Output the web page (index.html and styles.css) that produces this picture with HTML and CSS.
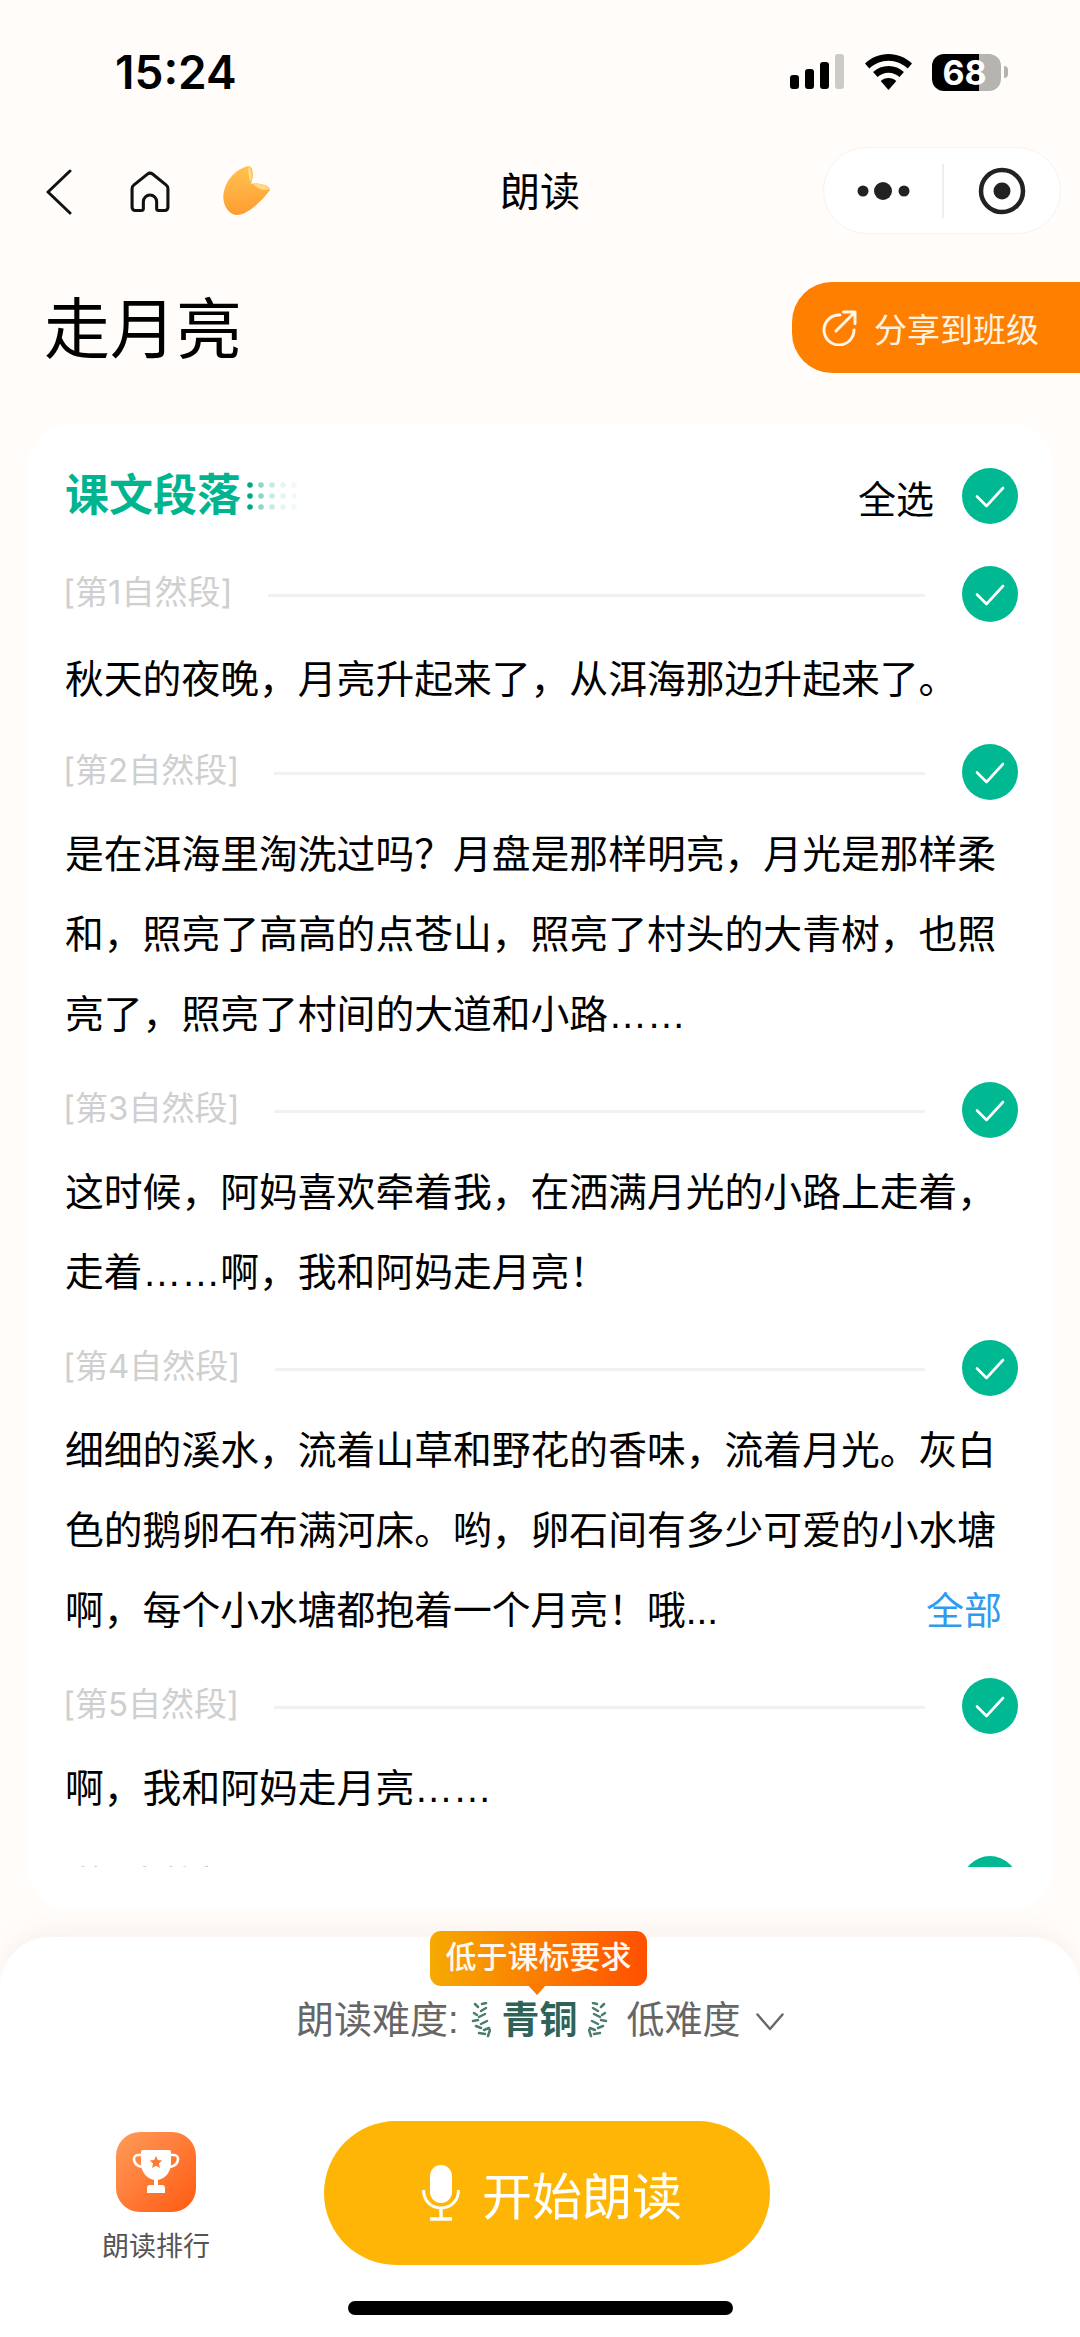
FILE: index.html
```html
<!DOCTYPE html>
<html lang="zh-CN">
<head>
<meta charset="utf-8">
<title>朗读</title>
<link rel="stylesheet" href="styles.css">
</head>
<body>
<svg class="defs" width="0" height="0" aria-hidden="true">
  <symbol id="check" viewBox="0 0 56 56">
    <circle cx="28" cy="28" r="28" fill="#00B992"/>
    <path d="M15 28.500 24.500 38 41 20" fill="none" stroke="#fff" stroke-width="2.600" stroke-linecap="round" stroke-linejoin="round"/>
  </symbol>
  <symbol id="laurel" viewBox="0 0 20 36">
    <path d="M11 2 15 1M7 5 4 2M10 9 15 6M3 11 6 13M8 15 14 12M2 19 7 18M10 22 16 19M5 24 10 26M13 28 18 26M8 31 14 32M17 34 19 28" fill="none" stroke="#4A7D70" stroke-width="2.500" stroke-linecap="round"/>
  </symbol>
</svg>
<div class="page">
  <header class="status">
    <span class="time">15:24</span>
    <div class="status-icons">
      <svg class="signal" width="54" height="36" viewBox="0 0 54 36">
        <rect x="0" y="21" width="9" height="14" rx="3" fill="#000"/>
        <rect x="15" y="15" width="9" height="20" rx="3" fill="#000"/>
        <rect x="30" y="8" width="9" height="27" rx="3" fill="#000"/>
        <rect x="45" y="0" width="9" height="35" rx="3" fill="#cdcbc8"/>
      </svg>
      <svg class="wifi" width="47" height="36" viewBox="0 0 47 36">
        <path d="M23.500 0C14.500 0 6.500 3.500 0 9.500l4.300 5C9.600 9.800 16.300 6.800 23.500 6.800s13.900 3 19.200 7.700l4.300-5C40.500 3.500 32.500 0 23.500 0z" fill="#000"/>
        <path d="M23.500 12c-6 0-11.300 2.300-15.400 6l4.400 5c3-2.600 6.800-4.200 11-4.200s8 1.600 11 4.200l4.400-5C34.800 14.300 29.500 12 23.500 12z" fill="#000"/>
        <path d="M23.500 24c-3 0-5.700 1-7.800 2.900L23.500 36l7.800-9.100C29.200 25 26.500 24 23.500 24z" fill="#000"/>
      </svg>
      <div class="battery"><span class="battery-num">68</span></div>
      <span class="battery-nub"></span>
    </div>
  </header>

  <nav class="nav">
    <div class="nav-left">
      <svg class="back" width="26" height="46" viewBox="0 0 26 46"><path d="M24 2 2 23l22 21" fill="none" stroke="#111" stroke-width="3" stroke-linecap="round" stroke-linejoin="round"/></svg>
      <svg class="home" width="40" height="42" viewBox="0 0 39 41"><path d="M11 38.500H5a3 3 0 0 1-3-3V17a4 4 0 0 1 1.600-3.200L17 3a4 4 0 0 1 5 0l13.400 10.800A4 4 0 0 1 37 17v18.500a3 3 0 0 1-3 3h-6a2 2 0 0 1-2-2V30a6.500 6.500 0 0 0-13 0v6.500a2 2 0 0 1-2 2z" fill="none" stroke="#111" stroke-width="3" stroke-linejoin="round"/></svg>
      <svg class="petal" width="48" height="50" viewBox="0 0 48 50">
        <defs>
          <linearGradient id="pg" x1=".4" y1="0" x2=".5" y2="1"><stop offset="0" stop-color="#FFC355"/><stop offset="1" stop-color="#FF9C2E"/></linearGradient>
          <linearGradient id="pg2" x1=".7" y1="0" x2=".2" y2="1"><stop offset="0" stop-color="#FFC24A"/><stop offset="1" stop-color="#FFB044"/></linearGradient>
        </defs>
        <path d="M25 0C14 3 4 12 1 25c-3 12 4 24 13 24 10 0 24-13 33-25 0-2-2-4-5-5-4-1-9-2-14-1 2-5 2-12 1-15-1-2-2-3-4-3z" fill="url(#pg)"/>
        <path d="M25 1C16 4 9 11 6 22c6-5 16-7 22-4 2-6 2-13 0-16z" fill="url(#pg2)"/>
        <path d="M27 2c2 5 2 11 1 15-2-5-3-11-3-16z" fill="#FFDD8E"/>
        <path d="M30 18c6-1 12 0 17 5-5 2-11 1-17-5z" fill="#FFD888"/>
      </svg>
    </div>
    <div class="nav-title">朗读</div>
    <div class="capsule">
      <div class="capsule-side">
        <svg width="54" height="20" viewBox="0 0 54 20"><circle cx="6" cy="10" r="5.500" fill="#222"/><circle cx="26" cy="10" r="9" fill="#222"/><circle cx="47" cy="10" r="5.500" fill="#222"/></svg>
      </div>
      <span class="capsule-div"></span>
      <div class="capsule-side">
        <svg width="48" height="48" viewBox="0 0 48 48"><circle cx="24" cy="24" r="21" fill="none" stroke="#222" stroke-width="4.500"/><circle cx="24" cy="24" r="8.500" fill="#222"/></svg>
      </div>
    </div>
  </nav>

  <section class="heading">
    <h1 class="title">走月亮</h1>
    <div class="share">
      <svg width="36" height="36" viewBox="0 0 36 36"><path d="M18 5A15 15 0 1 0 32 20" fill="none" stroke="#FFF6E8" stroke-width="3" stroke-linecap="round"/><path d="M14 21 33 2M21.500 2H33V13.500" fill="none" stroke="#FFF6E8" stroke-width="3" stroke-linecap="round" stroke-linejoin="round"/></svg>
      <span class="share-text">分享到班级</span>
    </div>
  </section>

  <main class="card">
    <div class="card-head">
      <div class="card-title-wrap">
        <h2 class="card-title">课文段落</h2>
        <svg width="52" height="28" viewBox="0 0 52 28" fill="#00A886">
          <g><circle cx="3" cy="3" r="2.800"/><circle cx="3" cy="14" r="2.800"/><circle cx="3" cy="25" r="2.800"/></g>
          <g opacity=".45"><circle cx="14" cy="3" r="2.800"/><circle cx="14" cy="14" r="2.800"/><circle cx="14" cy="25" r="2.800"/></g>
          <g opacity=".22"><circle cx="25" cy="3" r="2.800"/><circle cx="25" cy="14" r="2.800"/><circle cx="25" cy="25" r="2.800"/></g>
          <g opacity=".1"><circle cx="36" cy="3" r="2.800"/><circle cx="36" cy="14" r="2.800"/><circle cx="36" cy="25" r="2.800"/></g>
          <g opacity=".05"><circle cx="47" cy="3" r="2.800"/><circle cx="47" cy="14" r="2.800"/><circle cx="47" cy="25" r="2.800"/></g>
        </svg>
      </div>
      <div class="select-all">
        <span class="select-text">全选</span>
        <svg class="check"><use href="#check"/></svg>
      </div>
    </div>
    <div class="list">
      <article class="para">
        <div class="para-head"><span class="para-label">[第1自然段]</span><span class="para-line"></span><svg class="check"><use href="#check"/></svg></div>
        <p class="para-text">秋天的夜晚，月亮升起来了，从洱海那边升起来了。</p>
      </article>
      <article class="para">
        <div class="para-head"><span class="para-label">[第2自然段]</span><span class="para-line"></span><svg class="check"><use href="#check"/></svg></div>
        <p class="para-text">是在洱海里淘洗过吗？月盘是那样明亮，月光是那样柔和，照亮了高高的点苍山，照亮了村头的大青树，也照亮了，照亮了村间的大道和小路……</p>
      </article>
      <article class="para">
        <div class="para-head"><span class="para-label">[第3自然段]</span><span class="para-line"></span><svg class="check"><use href="#check"/></svg></div>
        <p class="para-text">这时候，阿妈喜欢牵着我，在洒满月光的小路上走着，走着……啊，我和阿妈走月亮！</p>
      </article>
      <article class="para">
        <div class="para-head"><span class="para-label">[第4自然段]</span><span class="para-line"></span><svg class="check"><use href="#check"/></svg></div>
        <p class="para-text">细细的溪水，流着山草和野花的香味，流着月光。灰白色的鹅卵石布满河床。哟，卵石间有多少可爱的小水塘</p>
        <div class="para-last"><span class="para-text">啊，每个小水塘都抱着一个月亮！哦...</span><a class="more">全部</a></div>
      </article>
      <article class="para">
        <div class="para-head"><span class="para-label">[第5自然段]</span><span class="para-line"></span><svg class="check"><use href="#check"/></svg></div>
        <p class="para-text">啊，我和阿妈走月亮……</p>
      </article>
      <article class="para">
        <div class="para-head"><span class="para-label">[第6自然段]</span><span class="para-line"></span><svg class="check"><use href="#check"/></svg></div>
      </article>
    </div>
  </main>

  <footer class="panel">
    <div class="tip">低于课标要求</div>
    <div class="level">
      <span class="level-text">朗读难度:</span>
      <svg class="laurel" width="20" height="36"><use href="#laurel"/></svg>
      <strong class="level-name">青铜</strong>
      <svg class="laurel laurel-r" width="20" height="36"><use href="#laurel"/></svg>
      <span class="level-text level-low">低难度</span>
      <svg class="chev" width="28" height="18" viewBox="0 0 28 18"><path d="M1.500 1.500 14 16 26.500 1.500" fill="none" stroke="#666" stroke-width="2.400" stroke-linecap="round" stroke-linejoin="round"/></svg>
    </div>
    <div class="actions">
      <div class="rank">
        <div class="rank-icon">
          <svg width="50" height="50" viewBox="0 0 50 50">
            <path d="M12 3H38a2 2 0 0 1 2 2V16C40 26 33 33 25 33 17 33 10 26 10 16V5a2 2 0 0 1 2-2z" fill="#fff"/>
            <path d="M23 32h4v7h-4z" fill="#fff"/>
            <path d="M19 38h12a3 3 0 0 1 3 3v5H16v-5a3 3 0 0 1 3-3z" fill="#fff"/>
            <path d="M11 8H7a4 4 0 0 0-4 4c0 4 3 7 8 8M39 8h4a4 4 0 0 1 4 4c0 4-3 7-8 8" fill="none" stroke="#fff" stroke-width="2.600"/>
            <path d="m25 9 1.800 4 4.400.5-3.200 3 .9 4.400-3.900-2.200-3.900 2.200.9-4.400-3.200-3 4.400-.5z" fill="#FF7A30"/>
          </svg>
        </div>
        <span class="rank-label">朗读排行</span>
      </div>
      <button class="start">
        <svg width="38" height="56" viewBox="0 0 38 56">
          <rect x="8" y="0" width="22" height="38" rx="11" fill="#fff"/>
          <path d="M1.500 25c0 10 7 18 17.500 18s17.500-8 17.500-18" fill="none" stroke="#fff" stroke-width="3"/>
          <path d="M19 43v10M8 54h22" fill="none" stroke="#fff" stroke-width="3.400"/>
        </svg>
        <span class="start-text">开始朗读</span>
      </button>
    </div>
    <div class="home-bar"></div>
  </footer>
</div>
</body>
</html>
```

FILE: styles.css
```css
* { box-sizing: border-box; margin: 0; padding: 0; }
html, body { width: 1080px; height: 2337px; overflow: hidden; }
body { background: #FFFCF9; color: #000; font-family: "Liberation Sans", "Noto Sans CJK SC", sans-serif; }
.defs { position: absolute; }
.page { height: 2337px; display: flex; flex-direction: column; }

.status { height: 144px; padding: 0 72px 0 115px; display: flex; align-items: center; justify-content: space-between; }
.time { font-family: Inter, "Liberation Sans", sans-serif; font-size: 46px; font-weight: 600; }
.status-icons { display: flex; align-items: center; }
.signal { margin-right: 21px; }
.wifi { margin-right: 20px; }
.battery { width: 69px; height: 37px; border-radius: 12px; background: linear-gradient(90deg, #000 0, #000 68%, #B5B4B0 68%); display: flex; align-items: center; justify-content: center; }
.battery-num { font-family: Inter, "Liberation Sans", sans-serif; font-size: 34px; font-weight: 700; color: #fff; margin-right: 4px; }
.battery-nub { width: 4px; height: 12px; margin-left: 3px; border-radius: 0 4px 4px 0; background: #B5B4B0; }

.nav { height: 96px; padding: 0 19px 0 46px; display: flex; align-items: center; position: relative; }
.nav-left { display: flex; align-items: center; }
.home { margin-left: 58px; }
.petal { margin-left: 53px; margin-top: -2px; }
.nav-title { position: absolute; left: 0; right: 0; text-align: center; font-size: 40px; line-height: 96px; }
.capsule { margin-left: auto; width: 238px; height: 87px; margin-top: -3px; padding-left: 2px; border-radius: 44px; background: #fff; border: 1px solid #F6F3F0; display: flex; align-items: center; position: relative; }
.capsule-side { flex: 1; display: flex; align-items: center; justify-content: center; }
.capsule-div { width: 2px; height: 54px; background: #F0EEEC; }

.heading { height: 184px; padding: 42px 0 0 44px; display: flex; align-items: flex-start; justify-content: space-between; }
.title { font-size: 66px; font-weight: 400; line-height: 96px; }
.share { width: 288px; height: 91px; border-radius: 40px 0 0 40px; background: #FF7F00; padding-left: 30px; display: flex; align-items: center; }
.share-text { margin-left: 16px; font-size: 33px; color: #FFF3E2; }

.card { height: 1486px; margin: 0 27px 0 28px; padding: 44px 35px 43px 37px; background: #fff; border-radius: 42px; display: flex; flex-direction: column; }
.card-head { height: 56px; margin-bottom: 42px; display: flex; align-items: center; justify-content: space-between; flex: none; }
.card-title-wrap { display: flex; align-items: center; }
.card-title { font-size: 44px; font-weight: 700; color: #00B48F; line-height: 56px; margin-right: 6px; }
.select-all { display: flex; align-items: center; }
.select-text { font-size: 38px; margin-right: 28px; }
.check { width: 56px; height: 56px; flex: none; display: block; }

.list { flex: 1; overflow: hidden; min-height: 0; margin-left: -4px; padding-left: 4px; }
.para { margin-bottom: 27px; }
.para:first-child { margin-bottom: 24px; }
.para-head { height: 56px; margin-bottom: 15px; display: flex; align-items: center; }
.para:first-child .para-head { margin-bottom: 18px; }
.para-label { font-family: Inter, "Noto Sans CJK SC", sans-serif; font-size: 33px; color: #CFCFCF; margin: 0 0 9px -2px; }
.para-line { flex: 1; height: 3px; margin: 2px 37px 0 35px; background: #F1F1F1; }
.para-text { font-size: 38.800px; line-height: 80px; width: 935px; }
.para-last { width: 937px; display: flex; justify-content: space-between; }
.para-last .para-text { width: auto; }
.more { font-size: 38px; line-height: 80px; color: #2F9BF0; }

.panel { flex: 1; margin-top: 27px; padding-top: 58px; background: #fff; border-radius: 50px 50px 0 0; box-shadow: 0 -10px 20px rgba(240, 225, 215, .25); position: relative; }
.tip { position: absolute; left: 430px; top: -6px; width: 217px; height: 55px; border-radius: 11px; background: linear-gradient(90deg, #F6AA00, #FF5000); color: #FFF8EE; font-size: 31px; font-weight: 500; line-height: 54px; text-align: center; }
.tip::after { content: ""; position: absolute; left: 97px; top: 53px; border: 10px solid transparent; border-top: 11px solid #FA7A00; border-bottom: 0; }
.level { height: 50px; padding-left: 296px; display: flex; align-items: center; }
.level-text { font-size: 38px; color: #666; line-height: 50px; }
.laurel { margin-left: 12px; flex: none; }
.laurel-r { margin-left: 10px; transform: scaleX(-1); }
.level-name { margin-left: 11px; font-size: 38px; font-weight: 700; color: #2F6358; line-height: 50px; }
.level-low { margin-left: 19px; }
.chev { margin-left: 15px; margin-top: 4px; }

.actions { margin-top: 76px; height: 144px; display: flex; align-items: flex-start; }
.rank { width: 130px; margin: 11px 0 0 91px; display: flex; flex-direction: column; align-items: center; }
.rank-icon { width: 80px; height: 80px; border-radius: 24px; background: linear-gradient(135deg, #FF9C5C, #FF5A10); display: flex; align-items: center; justify-content: center; }
.rank-label { margin-top: 17px; font-size: 27px; line-height: 36px; color: #555; }
.start { margin-left: 103px; width: 446px; height: 144px; border: 0; border-radius: 72px; background: #FFB505; display: flex; align-items: center; padding-left: 98px; font-family: inherit; }
.start-text { margin-left: 22px; font-size: 50px; color: #fff; }
.home-bar { width: 385px; height: 14px; margin: 36px auto 0; border-radius: 7px; background: #000; }
```
